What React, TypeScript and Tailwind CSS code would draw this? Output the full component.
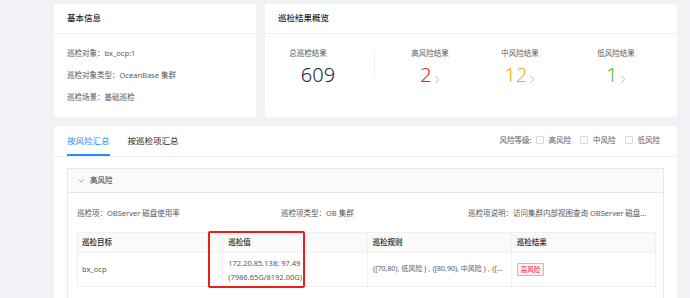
import { ChevronDown } from 'lucide-react';

const FONT = { fontFamily: '"Noto Sans", "Noto Sans CJK SC", sans-serif' };

const BASIC = [
  { label: '巡检对象：', value: 'bx_ocp:1' },
  { label: '巡检对象类型：', value: 'OceanBase 集群' },
  { label: '巡检场景：', value: '基础巡检' },
];

const RISKS = [
  { title: '高风险结果', value: '2', color: 'text-[#f5222d]', width: 'w-[90px] ml-[10px]' },
  { title: '中风险结果', value: '12', color: 'text-[#faad14]', width: 'w-[90px]' },
  { title: '低风险结果', value: '1', color: 'text-[#52c41a]', width: 'w-[90px] ml-[6px]' },
];

function Chevron() {
  return (
    <svg width="6" height="9" viewBox="0 0 6 9" className="mb-[3px] ml-[2px]">
      <polyline points="1,1 5,4.5 1,8" fill="none" stroke="#c4c4c4" strokeWidth="1" />
    </svg>
  );
}

function Check({ label }: { label: string }) {
  return (
    <span className="flex items-center">
      <span className="h-[8px] w-[8px] rounded-[1px] border border-[#d9d9d9] bg-white" />
      <span className="ml-[5px]">{label}</span>
    </span>
  );
}

export default function App() {
  return (
    <div style={FONT} className="h-[298px] w-[690px] overflow-hidden bg-[#f0f2f5] pl-[54px] pr-[13px] pt-[4px] text-[7.5px] text-[#595959]">
      {/* top row: basic info + summary */}
      <div className="flex h-[113px] gap-[9px]">
        <div className="w-[202px] rounded-[2px] bg-white">
          <div className="flex h-[30px] items-center border-b border-[#f0f0f0] px-[13px] text-[8.5px] font-medium text-[#262626]">
            基本信息
          </div>
          <div className="px-[13px] pt-[8px]">
            {BASIC.map((b) => (
              <div key={b.label} className="h-[22px] leading-[22px]">
                {b.label}
                {b.value}
              </div>
            ))}
          </div>
        </div>

        <div className="flex-1 rounded-[2px] bg-white">
          <div className="flex h-[30px] items-center border-b border-[#f0f0f0] px-[13px] text-[8.5px] font-medium text-[#262626]">
            巡检结果概览
          </div>
          <div className="flex items-start pt-[13px]">
            <div className="flex w-[86px] flex-col items-center">
              <div className="leading-[12px]">总巡检结果</div>
              <div className="mt-[4px] pl-[20px] text-[20px] font-light leading-[24px] text-[#1f1f1f]">609</div>
            </div>
            <div className="ml-[23px] mt-[5px] h-[26px] w-px bg-[#f0f0f0]" />
            {RISKS.map((r) => (
              <div key={r.title} className={`flex flex-col items-center ${r.width}`}>
                <div className="leading-[12px]">{r.title}</div>
                <div className="mt-[4px] flex items-end">
                  <span className={`text-[20px] font-light leading-[24px] ${r.color}`}>{r.value}</span>
                  <Chevron />
                </div>
              </div>
            ))}
          </div>
        </div>
      </div>

      {/* result detail */}
      <div className="mt-[9px] h-[200px] rounded-t-[2px] bg-white">
        <div className="flex h-[31px] items-end justify-between border-b border-[#f0f0f0] pl-[13px] pr-[17px]">
          <div className="flex gap-[18px] text-[8.5px]">
            <div className="border-b-2 border-[#1890ff] pb-[6px] text-[#1890ff]">按风险汇总</div>
            <div className="pb-[6px] text-[#262626]">按巡检项汇总</div>
          </div>
          <div className="mb-[10px] flex items-center gap-[9px]">
            <span className="flex items-center">
              <span className="mr-[4px]">风险等级:</span>
              <Check label="高风险" />
            </span>
            <Check label="中风险" />
            <Check label="低风险" />
          </div>
        </div>

        <div className="mx-[13px] mt-[11px] h-[200px] border border-[#e8e8e8]">
          <div className="flex h-[24px] items-center border-b border-[#e8e8e8] bg-[#fafafa] pl-[9px] text-[#262626]">
            <ChevronDown size={8} strokeWidth={1.5} className="text-[#595959]" />
            <span className="ml-[5px]">高风险</span>
          </div>
          <div className="px-[9px] pt-[14px]">
            <div className="flex leading-[12px]">
              <div className="w-[204px]">巡检项：OBServer 磁盘使用率</div>
              <div className="w-[187px]">巡检项类型：OB 集群</div>
              <div className="whitespace-nowrap">巡检项说明：访问集群内部视图查询 OBServer 磁盘...</div>
            </div>

            <div className="relative mt-[13px] w-[579px] border border-[#f0f0f0]">
              <div className="grid h-[20px] grid-cols-4 items-center border-b border-[#f0f0f0] bg-[#fafafa] font-medium text-[#262626]">
                <div className="pl-[4px]">巡检目标</div>
                <div className="flex h-full items-center border-l border-[#f0f0f0] pl-[5px]">巡检值</div>
                <div className="flex h-full items-center border-l border-[#f0f0f0] pl-[5px]">巡检规则</div>
                <div className="flex h-full items-center border-l border-[#f0f0f0] pl-[5px]">巡检结果</div>
              </div>
              <div className="grid h-[33px] grid-cols-4 items-center">
                <div className="pl-[4px]">bx_ocp</div>
                <div className="flex h-full flex-col justify-center border-l border-[#f0f0f0] pl-[5px] leading-[14px]">
                  <span>172.20.85.138: 97.49</span>
                  <span>(7986.65G/8192.00G)</span>
                </div>
                <div className="flex h-full items-center whitespace-nowrap border-l border-[#f0f0f0] pl-[5px] text-[7px]">
                  {'{[70,80), 低风险 } , {[80,90), 中风险 } , {[...'}
                </div>
                <div className="flex h-full items-center border-l border-[#f0f0f0] pl-[5px]">
                  <span className="rounded-[1px] border border-[#ffa39e] bg-[#fff1f0] px-[3px] py-[1px] text-[6.5px] leading-[9px] text-[#f5222d]">
                    高风险
                  </span>
                </div>
              </div>
              {/* red highlight box */}
              <div className="absolute left-[130px] top-[-2px] h-[57px] w-[97px] rounded-[2px] border-2 border-[#f01c1c]" />
            </div>
          </div>
        </div>
      </div>
    </div>
  );
}
